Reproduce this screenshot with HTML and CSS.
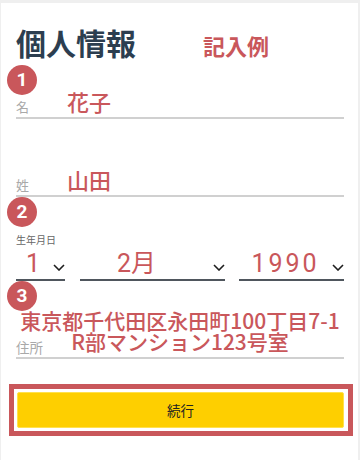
FILE: index.html
```html
<!DOCTYPE html>
<html lang="ja">
<head>
<meta charset="utf-8">
<title>個人情報</title>
<link rel="stylesheet" href="styles.css">
</head>
<body>
<div class="card">
  <div class="head">
    <h1 class="title">個人情報</h1>
    <span class="example">記入例</span>
  </div>

  <div class="badge badge-first">1</div>
  <div class="field">
    <span class="label">名</span>
    <span class="value">花子</span>
  </div>

  <div class="field field-gap">
    <span class="label">姓</span>
    <span class="value">山田</span>
  </div>

  <div class="badge">2</div>
  <div class="dob-label">生年月日</div>
  <div class="selects">
    <div class="sel">
      <span class="sel-text">1</span>
      <svg class="chev" viewBox="0 0 12 7" width="12" height="7"><path d="M1 1 L6 6 L11 1"/></svg>
    </div>
    <div class="sel sel-month">
      <span class="sel-text">2月</span>
      <svg class="chev" viewBox="0 0 12 7" width="12" height="7"><path d="M1 1 L6 6 L11 1"/></svg>
    </div>
    <div class="sel">
      <span class="sel-text">1990</span>
      <svg class="chev" viewBox="0 0 12 7" width="12" height="7"><path d="M1 1 L6 6 L11 1"/></svg>
    </div>
  </div>

  <div class="badge badge-addr">3</div>
  <div class="field field-addr">
    <span class="label label-addr">住所</span>
    <span class="value addr">東京都千代田区永田町100丁目7-1<br>R部マンション123号室</span>
  </div>

  <div class="frame">
    <button class="cta" type="button">続行</button>
  </div>
</div>
</body>
</html>
```

FILE: styles.css
```css
html, body {
  margin: 0;
  padding: 0;
}

body {
  background: #efefef;
  font-family: "Noto Sans CJK JP", "Noto Sans", sans-serif;
}

.card {
  background: #ffffff;
  margin: 3px 2px 0 1px;
  min-height: 457px;
  box-sizing: border-box;
  padding: 24px 14px 0 15px;
}

.head {
  display: flex;
  align-items: baseline;
  height: 30px;
}

.title {
  margin: 0;
  font-size: 30px;
  line-height: 30px;
  font-weight: 700;
  color: #2c3e50;
}

.example {
  margin-left: 67px;
  font-size: 22px;
  line-height: 22px;
  font-weight: 700;
  color: #c9575b;
}

.badge {
  width: 30px;
  height: 30px;
  margin-left: -9px;
  border-radius: 50%;
  background: #c9575b;
  color: #ffffff;
  font-family: Roboto, "Noto Sans", sans-serif;
  font-weight: 700;
  font-size: 19px;
  line-height: 30px;
  text-align: center;
}

.badge-first {
  margin-top: 8px;
  margin-bottom: -7px;
}

.badge-addr {
  margin-bottom: -1px;
}

.field {
  display: grid;
  padding-bottom: 3px;
  border-bottom: 2px solid #d0d0d0;
}

.field > * {
  grid-area: 1 / 1;
}

.field-gap {
  margin-top: 47px;
}

.label {
  align-self: end;
  justify-self: start;
  font-size: 13px;
  line-height: 13px;
  margin-bottom: 1px;
  color: #a9a9a9;
}

.value {
  padding-left: 51px;
  font-size: 22px;
  line-height: 26px;
  font-weight: 500;
  color: #c9575b;
}

.dob-label {
  margin-top: 7px;
  font-size: 10px;
  line-height: 12px;
  color: #666666;
}

.selects {
  margin-top: 3px;
  display: grid;
  grid-template-columns: 49px 145px 105px;
  justify-content: space-between;
}

.sel {
  display: flex;
  align-items: flex-end;
  border-bottom: 2px solid #4f565d;
}

.sel-text {
  flex: 1;
  text-align: center;
  font-family: Roboto, "Noto Sans CJK JP", sans-serif;
  font-size: 25px;
  line-height: 30px;
  letter-spacing: 3px;
  color: #c9575b;
}

.sel-month .sel-text {
  padding-right: 19px;
  letter-spacing: 0;
}

.chev {
  flex: none;
  margin-bottom: 8px;
  fill: none;
  stroke: #1e1e1e;
  stroke-width: 1.6;
}

.field-addr {
  padding-bottom: 0;
}

.addr {
  padding-left: 0;
  padding-bottom: 5px;
  text-align: center;
  font-size: 21px;
  line-height: 21px;
}

.label-addr {
  margin-bottom: 3px;
  font-size: 13.5px;
}

.frame {
  margin: 25px -9px 0 -7px;
  border: 5px solid #c9575b;
  padding: 3px 4px 3px 3px;
  background: #ffffff;
}

.cta {
  display: block;
  width: 100%;
  height: 36px;
  margin: 0;
  padding: 0;
  border: 1px solid #ffe14d;
  border-radius: 2px;
  background: #fecf00;
  font-family: "Noto Sans CJK JP", sans-serif;
  font-size: 13.5px;
  color: #222222;
}
```
